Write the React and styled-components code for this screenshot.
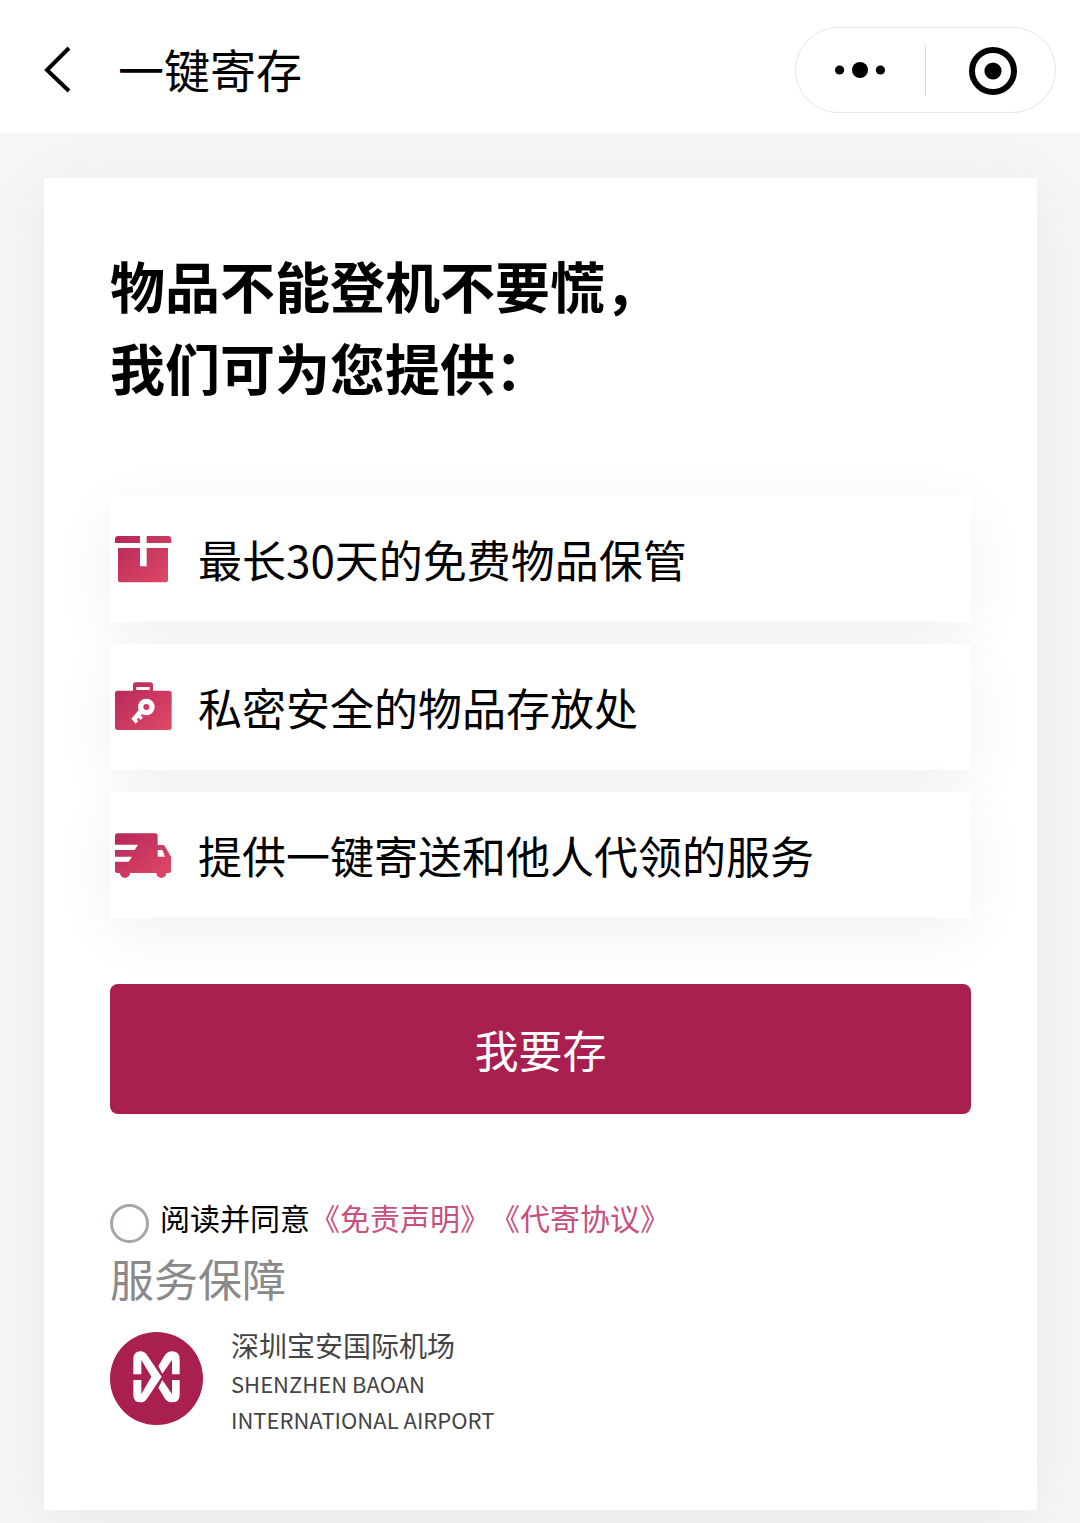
import React, { useState } from 'react';
import styled, { createGlobalStyle, ThemeProvider } from 'styled-components';

const theme = {
  colors: {
    primary: '#a81f50',
    link: '#c8507e',
    black: '#000000',
    text: '#444444',
    gray: '#8a8a8a',
    border: '#e5e5e5',
    background: '#f5f6f8',
    white: '#ffffff',
  },
};

const services = [
  { id: 'keep', text: '最长30天的免费物品保管', Icon: BoxIcon },
  { id: 'safe', text: '私密安全的物品存放处', Icon: CaseIcon },
  { id: 'send', text: '提供一键寄送和他人代领的服务', Icon: TruckIcon },
];

const App = () => {
  const [agreed, setAgreed] = useState(false);

  return (
    <ThemeProvider theme={theme}>
      <GlobalStyle />
      <Header>
        <BackButton type="button" aria-label="返回">
          <svg width="48" height="48" viewBox="0 0 48 48">
            <path
              d="M36 2 14 24l22 21"
              fill="none"
              stroke="#000"
              strokeWidth="4"
            />
          </svg>
        </BackButton>
        <PageTitle>一键寄存</PageTitle>
        <Capsule>
          <CapsuleButton type="button" aria-label="更多">
            <svg width="52" height="48" viewBox="0 0 52 48">
              <circle cx="4.6" cy="24" r="4.6" />
              <circle cx="25" cy="24" r="8" />
              <circle cx="45.4" cy="24" r="4.6" />
            </svg>
          </CapsuleButton>
          <CapsuleDivider />
          <CapsuleButton type="button" aria-label="关闭">
            <svg width="52" height="50" viewBox="0 0 52 50">
              <circle
                cx="28"
                cy="26"
                r="21"
                fill="none"
                stroke="#000"
                strokeWidth="6"
              />
              <circle cx="28" cy="26" r="8.6" />
            </svg>
          </CapsuleButton>
        </Capsule>
      </Header>
      <Main>
        <Card>
          <Headline>
            物品不能登机不要慌，
            <br />
            我们可为您提供：
          </Headline>
          <ServiceList>
            {services.map(({ id, text, Icon }) => (
              <ServiceItem key={id}>
                <Icon />
                {text}
              </ServiceItem>
            ))}
          </ServiceList>
          <SubmitButton type="button">我要存</SubmitButton>
          <Agreement>
            <AgreeCheckbox
              id="agree"
              type="checkbox"
              checked={agreed}
              onChange={(e) => setAgreed(e.target.checked)}
            />
            <label htmlFor="agree">阅读并同意</label>
            <TermsLink href="#disclaimer">《免责声明》</TermsLink>
            <TermsLink href="#delivery">《代寄协议》</TermsLink>
          </Agreement>
          <GuaranteeTitle>服务保障</GuaranteeTitle>
          <Provider>
            <AirportLogo />
            <div>
              <ProviderName>深圳宝安国际机场</ProviderName>
              <ProviderNameEn>SHENZHEN BAOAN</ProviderNameEn>
              <ProviderNameEn>INTERNATIONAL AIRPORT</ProviderNameEn>
            </div>
          </Provider>
        </Card>
      </Main>
    </ThemeProvider>
  );
};

function Gradient({ id }) {
  return (
    <linearGradient id={id} x1="0" y1="0" x2="1" y2="1">
      <stop offset="0" stopColor="#b5275a" />
      <stop offset="1" stopColor="#e04a66" />
    </linearGradient>
  );
}

function BoxIcon() {
  return (
    <ServiceIcon viewBox="0 0 198 198" aria-hidden="true">
      <Gradient id="box" />
      <path
        fill="url(#box)"
        d="M25 30H90V51H15V40Q15 30 25 30ZM110 30H174Q184 30 184 40V51H110ZM24 66H90V121H110V66H174V161Q174 169 166 169H32Q24 169 24 161Z"
      />
    </ServiceIcon>
  );
}

function CaseIcon() {
  return (
    <ServiceIcon viewBox="0 0 198 198" aria-hidden="true">
      <Gradient id="case" />
      <path
        fill="url(#case)"
        fillRule="evenodd"
        d="M23 50H69V33Q69 25 77 25H121Q129 25 129 33V50H177Q185 50 185 58V160Q185 168 177 168H23Q15 168 15 160V58Q15 50 23 50ZM79 39V48H119V39Z"
      />
      <circle cx="109" cy="99" r="17" fill="none" stroke="#fff" strokeWidth="16" />
      <path
        fill="#fff"
        d="M88 106 64 134 77 149 85 142 80 137 86 131 92 138 99 131 92 124 104 114Z"
      />
    </ServiceIcon>
  );
}

function TruckIcon() {
  return (
    <ServiceIcon viewBox="0 0 198 198" aria-hidden="true">
      <Gradient id="truck" />
      <path
        fill="url(#truck)"
        fillRule="evenodd"
        d="M23 34H135Q143 34 143 42V69H158Q163 69 166 75L183 104V147Q183 153 177 153H169A15 15 0 0 1 139 153H60A15 15 0 0 1 30 153H21Q15 153 15 147V119H56L66 104H15V84H74L84 68H15V42Q15 34 23 34ZM143 84V104H165L157 84Z"
      />
    </ServiceIcon>
  );
}

function AirportLogo() {
  return (
    <Logo viewBox="0 0 279 279" aria-hidden="true">
      <circle cx="139.5" cy="139.5" r="139.5" fill="#a81f50" />
      <path
        fill="#fff"
        d="M70 127V82Q70 58 92 58Q104 58 111 69L155 134 111 200Q104 211 92 211Q70 211 70 188V144H94V186L124 134 94 84V127Z"
      />
      <path
        fill="#fff"
        d="M145 102 165 69Q173 58 186 58Q209 58 209 82V127H186V84L157 125ZM145 167 165 200Q173 211 186 211Q209 211 209 188V144H186V186L157 144Z"
      />
    </Logo>
  );
}

const GlobalStyle = createGlobalStyle`
  * {
    box-sizing: border-box;
  }

  body {
    margin: 0;
    background: #f5f6f8;
    color: #000000;
    font-family: 'Noto Sans CJK SC', 'Noto Sans', sans-serif;
  }

  button {
    padding: 0;
    border: 0;
    background: none;
    font-family: inherit;
    cursor: pointer;
  }

  svg {
    display: block;
    flex-shrink: 0;
  }
`;

const Header = styled.header`
  position: relative;
  z-index: 1;
  display: flex;
  align-items: center;
  padding: 27px 24px 21px 33px;
  background: ${({ theme }) => theme.colors.white};
`;

const BackButton = styled.button`
  width: 48px;
  height: 48px;
`;

const PageTitle = styled.h1`
  flex: 1;
  margin: 0 0 0 37px;
  padding-bottom: 4px;
  font-size: 46px;
  font-weight: 400;
  line-height: 66px;
`;

const Capsule = styled.div`
  display: flex;
  align-items: center;
  width: 261px;
  height: 86px;
  border: 1px solid ${({ theme }) => theme.colors.border};
  border-radius: 43px;
`;

const CapsuleButton = styled.button`
  display: flex;
  flex: 1;
  align-items: center;
  justify-content: center;
  height: 100%;
`;

const CapsuleDivider = styled.span`
  width: 1px;
  height: 51px;
  background: #dddddd;
`;

const Main = styled.main`
  padding: 44px 43px 13px 44px;
`;

const Card = styled.section`
  padding: 65px 66px 73px;
  background: ${({ theme }) => theme.colors.white};
  box-shadow: 0 11px 66px rgba(0, 0, 0, 0.06);
`;

const Headline = styled.h2`
  margin: 0;
  font-size: 55px;
  font-weight: 700;
  line-height: 82px;
`;

const ServiceList = styled.ul`
  display: flex;
  flex-direction: column;
  gap: 22px;
  margin: 89px 0 66px;
  padding: 0;
  list-style: none;
`;

const ServiceItem = styled.li`
  display: flex;
  align-items: center;
  gap: 22px;
  min-height: 126px;
  background: ${({ theme }) => theme.colors.white};
  box-shadow: 0 14px 60px rgba(0, 0, 0, 0.06);
  font-size: 44px;
  line-height: 66px;
`;

const ServiceIcon = styled.svg`
  width: 66px;
  height: 66px;
`;

const SubmitButton = styled.button`
  display: block;
  width: 100%;
  height: 130px;
  border-radius: 8px;
  background: ${({ theme }) => theme.colors.primary};
  color: ${({ theme }) => theme.colors.white};
  font-size: 44px;
`;

const Agreement = styled.div`
  display: flex;
  align-items: flex-start;
  margin-top: 81px;
  font-size: 30px;
  line-height: 44px;
`;

const AgreeCheckbox = styled.input`
  appearance: none;
  width: 39px;
  height: 39px;
  margin: 9px 11px 0 0;
  border: 3px solid #a0a8aa;
  border-radius: 50%;
  background: ${({ theme }) => theme.colors.white};

  &:checked {
    border-color: ${({ theme }) => theme.colors.primary};
    background: ${({ theme }) => theme.colors.primary};
  }
`;

const TermsLink = styled.a`
  color: ${({ theme }) => theme.colors.link};
  text-decoration: none;
`;

const GuaranteeTitle = styled.h3`
  margin: 2px 0 0;
  color: ${({ theme }) => theme.colors.gray};
  font-size: 44px;
  font-weight: 400;
  line-height: 66px;
`;

const Provider = styled.div`
  display: flex;
  align-items: flex-start;
  gap: 28px;
  margin-top: 14px;
`;

const Logo = styled.svg`
  width: 93px;
  height: 93px;
  margin-top: 7px;
`;

const ProviderName = styled.p`
  margin: 0;
  color: ${({ theme }) => theme.colors.text};
  font-size: 28px;
  line-height: 40px;
`;

const ProviderNameEn = styled(ProviderName)`
  font-size: 22px;
  line-height: 36px;
`;

export default App;
